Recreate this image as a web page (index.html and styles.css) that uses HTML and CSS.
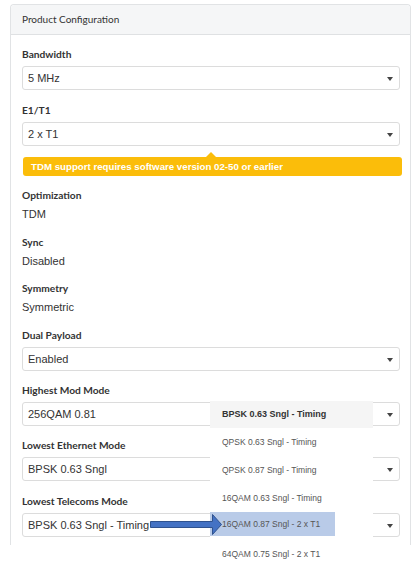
FILE: index.html
```html
<!DOCTYPE html>
<html>
<head>
<meta charset="utf-8">
<link rel="stylesheet" href="styles.css">
</head>
<body>
<div class="card">
  <div class="card-header">Product Configuration</div>
  <div class="card-body">
    <div class="field">
      <div class="label">Bandwidth</div>
      <div class="select"><span>5 MHz</span><i class="caret"></i></div>
    </div>
    <div class="field">
      <div class="label">E1/T1</div>
      <div class="select"><span>2 x T1</span><i class="caret"></i></div>
      <div class="tip">TDM support requires software version 02-50 or earlier</div>
    </div>
    <div class="field static">
      <div class="label">Optimization</div>
      <div class="value">TDM</div>
    </div>
    <div class="field static">
      <div class="label">Sync</div>
      <div class="value">Disabled</div>
    </div>
    <div class="field static">
      <div class="label">Symmetry</div>
      <div class="value">Symmetric</div>
    </div>
    <div class="field compact">
      <div class="label">Dual Payload</div>
      <div class="select"><span>Enabled</span><i class="caret"></i></div>
    </div>
    <div class="field compact">
      <div class="label">Highest Mod Mode</div>
      <div class="select"><span>256QAM 0.81</span><i class="caret"></i></div>
    </div>
    <div class="field compact">
      <div class="label">Lowest Ethernet Mode</div>
      <div class="select"><span>BPSK 0.63 Sngl</span><i class="caret"></i></div>
    </div>
    <div class="field last">
      <div class="label">Lowest Telecoms Mode</div>
      <div class="select"><span>BPSK 0.63 Sngl - Timing</span><i class="caret"></i></div>
    </div>
  </div>
</div>

<div class="dropdown">
  <div class="opt first">BPSK 0.63 Sngl - Timing</div>
  <div class="opt">QPSK 0.63 Sngl - Timing</div>
  <div class="opt">QPSK 0.87 Sngl - Timing</div>
  <div class="opt">16QAM 0.63 Sngl - Timing</div>
  <div class="opt"><div class="hl">16QAM 0.87 Sngl - 2 x T1</div></div>
  <div class="opt">64QAM 0.75 Sngl - 2 x T1</div>
</div>

<svg class="arrow" width="74" height="24" viewBox="0 0 74 24">
  <path d="M0.5 8.5 H62.5 V1.5 L71.5 11.5 L62.5 21.5 V14.5 H0.5 Z" fill="#4472c4" stroke="#2f528f" stroke-width="1"/>
</svg>
</body>
</html>
```

FILE: styles.css
```css
html, body {
  margin: 0;
  padding: 0;
  background: #ffffff;
}
body {
  position: relative;
  width: 414px;
  height: 563px;
  overflow: hidden;
  padding: 4px 0 0 10px;
  box-sizing: border-box;
  font-family: "Liberation Sans", Arial, sans-serif;
  color: #333;
}
.card {
  width: 401px;
  box-sizing: border-box;
  border: 1px solid #e1e3e5;
  border-bottom: none;
  border-radius: 4px 4px 0 0;
}
.card-header {
  height: 29px;
  line-height: 29px;
  padding-left: 11px;
  background: #f5f6f7;
  border-bottom: 1px solid #dfe1e3;
  border-radius: 4px 4px 0 0;
  font-family: Lato, "Liberation Sans", sans-serif;
  font-size: 10px;
  color: #333;
}
.card-body {
  padding: 12px 10px 8px 11px;
}
.field {
  margin-bottom: 12.5px;
}
.field.static {
  margin-bottom: 12.67px;
}
.field.compact {
  margin-bottom: 12.2px;
}
.field.last {
  margin-bottom: 0;
}
.label {
  height: 14px;
  line-height: 14px;
  margin-bottom: 5px;
  font-family: Lato, "Liberation Sans", sans-serif;
  font-weight: 700;
  font-size: 10.2px;
  color: #333;
}
.static .label {
  margin-bottom: 4px;
}
.value {
  height: 16px;
  line-height: 16px;
  font-size: 11px;
  color: #333;
}
.select {
  height: 24px;
  box-sizing: border-box;
  border: 1px solid #dcdcdc;
  border-radius: 3px;
  padding: 0 6px 0 5px;
  display: flex;
  align-items: center;
  justify-content: space-between;
  font-size: 11px;
  color: #333;
  background: #fff;
}
.caret {
  width: 0;
  height: 0;
  border-left: 3.5px solid transparent;
  border-right: 3.5px solid transparent;
  border-top: 4px solid #444;
  margin-top: 2px;
}
.tip {
  position: relative;
  margin: 11px 0 0 1px;
  width: 379px;
  height: 19px;
  line-height: 19px;
  box-sizing: border-box;
  padding-left: 8px;
  background: #fbbd0a;
  border-radius: 3px;
  color: #fff;
  font-weight: 700;
  font-size: 9.7px;
}
.tip::before {
  content: "";
  position: absolute;
  left: 183px;
  top: -5px;
  width: 0;
  height: 0;
  border-left: 5px solid transparent;
  border-right: 5px solid transparent;
  border-bottom: 5px solid #fbbd0a;
}
.dropdown {
  position: absolute;
  left: 210px;
  top: 400px;
  width: 163px;
  background: #fff;
}
.opt {
  height: 28px;
  line-height: 28px;
  padding-left: 12px;
  font-size: 8.5px;
  color: #555;
}
.opt.first {
  height: 27px;
  margin-top: 1px;
  line-height: 27px;
  background: #f5f5f5;
  font-weight: 700;
  font-size: 9px;
  color: #333;
}
.opt .hl {
  margin-left: -12px;
  padding-left: 12px;
  width: 113px;
  height: 24px;
  line-height: 24px;
  background: #b9cbe8;
}
.arrow {
  position: absolute;
  left: 150px;
  top: 513px;
}
```
